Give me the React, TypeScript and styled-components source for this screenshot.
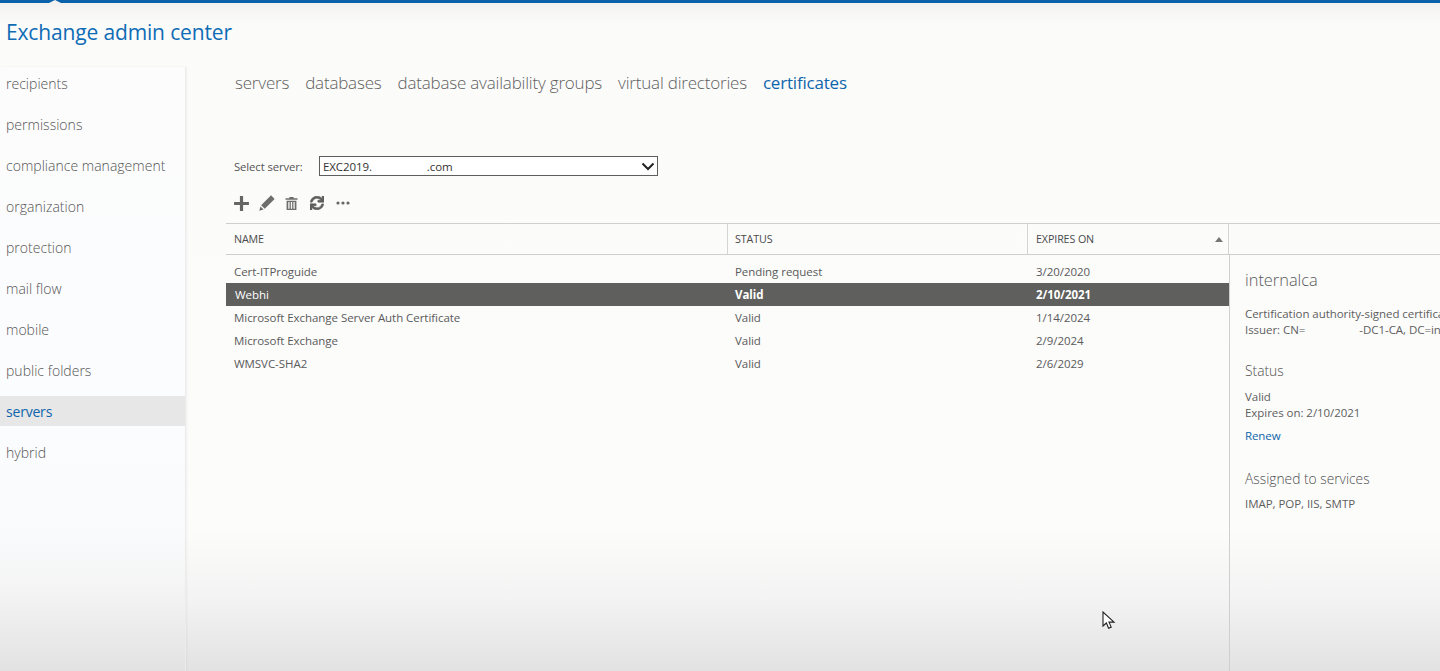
import React from "react"
import styled, { createGlobalStyle } from "styled-components"
import { FaSync } from "react-icons/fa"

const GlobalStyle = createGlobalStyle`
  html, body {
    margin: 0;
    padding: 0;
    height: 100%;
    overflow: hidden;
  }
  * {
    box-sizing: border-box;
  }
`

const Page: any = styled.div`
  position: relative;
  width: 1440px;
  height: 671px;
  overflow: hidden;
  display: flex;
  flex-direction: column;
  font-family: "Open Sans", "Noto Sans", sans-serif;
  color: #555;
  background: linear-gradient(
    180deg,
    #f3f2f1 3px,
    #fbfbfa 24px,
    #fcfcfb 530px,
    #f3f3f3 600px,
    #e2e2e2 671px
  );
`

const TopBar: any = styled.div`
  position: relative;
  height: 3px;
  flex: none;
  background: #0a62ab;

  &::after {
    content: "";
    position: absolute;
    left: 49px;
    top: 0;
    border-left: 6px solid transparent;
    border-right: 6px solid transparent;
    border-bottom: 3px solid #f3f2f1;
  }
`

const Title: any = styled.h1`
  flex: none;
  height: 64px;
  margin: 0;
  padding: 14px 0 0 6px;
  font-size: 21px;
  line-height: 30px;
  font-weight: 400;
  letter-spacing: -0.15px;
  color: #0f6cb5;
`

const Body: any = styled.div`
  flex: 1;
  min-height: 0;
  display: flex;
`

const Sidebar: any = styled.nav`
  width: 186px;
  flex: none;
  padding-top: 1px;
  border-right: 1px solid #ececec;
  box-shadow: 1px 0 2px rgba(0, 0, 0, 0.05);
  background: linear-gradient(
    180deg,
    #fcfcfc 0,
    #fbfcfe 340px,
    #fafbfd 450px,
    rgba(244, 244, 245, 0.6) 520px,
    rgba(226, 226, 226, 0.6) 604px
  );
`

const NavItem: any = styled.div`
  height: 30px;
  margin-bottom: 11px;
  padding-left: 6px;
  font-size: 14px;
  line-height: 32px;
  font-weight: ${(props: any) => (props.$active ? 400 : 300)};
  letter-spacing: ${(props: any) => (props.$active ? "-0.2px" : "0.02px")};
  color: ${(props: any) => (props.$active ? "#0f65ab" : "#555")};
  background: ${(props: any) => (props.$active ? "#e7e7e7" : "transparent")};
`

const Main: any = styled.main`
  flex: 1;
  min-width: 0;
  padding-left: 40px;
  display: flex;
  flex-direction: column;
`

const Tabs: any = styled.div`
  display: flex;
  gap: 16px;
  height: 32px;
  padding-left: 9px;
`

const Tab: any = styled.span`
  font-size: 17px;
  line-height: 32px;
  font-weight: ${(props: any) => (props.$active ? 400 : 300)};
  letter-spacing: -0.2px;
  white-space: nowrap;
  color: ${(props: any) => (props.$active ? "#0f65ab" : "#5f5f5f")};
`

const ServerRow: any = styled.div`
  display: flex;
  align-items: center;
  height: 20px;
  margin-top: 57px;
  padding-left: 8px;
`

const ServerLabel: any = styled.label`
  width: 85px;
  font-size: 11.3px;
  font-weight: 400;
  letter-spacing: -0.1px;
  color: #555;
`

const SelectBox: any = styled.div`
  width: 339px;
  height: 20px;
  display: flex;
  align-items: center;
  justify-content: space-between;
  padding: 0 2px 0 3px;
  border: 1px solid #5e5e5e;
  background: #fff;
  font-size: 11.5px;
  letter-spacing: -0.1px;
  color: #333;
`

const Gap: any = styled.span`
  display: inline-block;
  width: ${(props: any) => props.$w}px;
`

const Toolbar: any = styled.div`
  display: flex;
  align-items: center;
  height: 24px;
  margin-top: 15px;
  padding-left: 7px;
  color: #666;
`

const ToolIcon: any = styled.span`
  display: flex;
  align-items: center;
  justify-content: center;
  width: 16px;
  height: 16px;
  margin-right: ${(props: any) => props.$gap}px;
  color: #5e5e5e;

  svg {
    flex: none;
  }
`

const HeaderRow: any = styled.div`
  display: grid;
  grid-template-columns: 502px 300px 201px 1fr;
  height: 32px;
  margin-top: 8px;
  border-top: 1px solid #cfcfcf;
  border-bottom: 1px solid #cfcfcf;
`

const HeaderCell: any = styled.div`
  display: flex;
  align-items: center;
  justify-content: space-between;
  padding: 0 8px 0 ${(props: any) => props.$pad || 8}px;
  font-size: 10.7px;
  letter-spacing: -0.1px;
  color: #4a4a4a;
  border-right: 1px solid #d4d4d4;

  &:last-child {
    border-right: none;
  }
`

const SortArrow: any = styled.span`
  width: 0;
  height: 0;
  margin-right: -3px;
  border-left: 4px solid transparent;
  border-right: 4px solid transparent;
  border-bottom: 5px solid #777;
`

const Split: any = styled.div`
  flex: 1;
  min-height: 0;
  display: flex;
`

const ListPane: any = styled.div`
  width: 1003px;
  flex: none;
  padding-top: 5px;
`

const Row: any = styled.div`
  display: grid;
  grid-template-columns: 502px 300px 201px;
  height: 23px;
  align-items: center;
  font-size: 11.5px;
  letter-spacing: -0.05px;
  color: ${(props: any) => (props.$selected ? "#fff" : "#5a5a5a")};
  background: ${(props: any) => (props.$selected ? "#5f5f5d" : "transparent")};
`

const Cell: any = styled.div`
  padding-left: ${(props: any) => props.$pad}px;
  font-weight: ${(props: any) => (props.$bold ? 700 : 400)};
  white-space: nowrap;
`

const DetailPane: any = styled.aside`
  flex: 1;
  min-width: 0;
  padding: 13px 0 0 15px;
  border-left: 1px solid #cfcfcf;
  overflow: hidden;
  white-space: nowrap;
`

const DetailName: any = styled.h2`
  margin: 0 0 14px;
  font-size: 16.4px;
  line-height: 24px;
  font-weight: 300;
  color: #5a5a5a;
`

const DetailText: any = styled.div`
  font-size: 11.5px;
  line-height: 16px;
  letter-spacing: -0.05px;
  color: #5e5e5e;
`

const DetailHeading: any = styled.h3`
  margin: ${(props: any) => props.$top}px 0 ${(props: any) => props.$bottom}px;
  font-size: 13.8px;
  line-height: 20px;
  font-weight: 300;
  color: #4f4f4f;
`

const RenewLink: any = styled.a`
  display: block;
  margin-top: 7px;
  font-size: 11.5px;
  line-height: 16px;
  letter-spacing: -0.1px;
  color: #0f65ab;
`

const Cursor: any = styled.svg`
  position: absolute;
  left: 1102px;
  top: 611px;
`

const navItems = [
  "recipients",
  "permissions",
  "compliance management",
  "organization",
  "protection",
  "mail flow",
  "mobile",
  "public folders",
  "servers",
  "hybrid",
]

const tabs = [
  "servers",
  "databases",
  "database availability groups",
  "virtual directories",
  "certificates",
]

const certificates = [
  { name: "Cert-ITProguide", status: "Pending request", expires: "3/20/2020" },
  { name: "Webhi", status: "Valid", expires: "2/10/2021", selected: true },
  {
    name: "Microsoft Exchange Server Auth Certificate",
    status: "Valid",
    expires: "1/14/2024",
  },
  { name: "Microsoft Exchange", status: "Valid", expires: "2/9/2024" },
  { name: "WMSVC-SHA2", status: "Valid", expires: "2/6/2029" },
]

const App: React.FC = () => {
  return (
    <Page>
      <GlobalStyle />
      <TopBar />
      <Title>Exchange admin center</Title>
      <Body>
        <Sidebar>
          {navItems.map(item => (
            <NavItem key={item} $active={item === "servers"}>
              {item}
            </NavItem>
          ))}
        </Sidebar>
        <Main>
          <Tabs>
            {tabs.map(tab => (
              <Tab key={tab} $active={tab === "certificates"}>
                {tab}
              </Tab>
            ))}
          </Tabs>
          <ServerRow>
            <ServerLabel>Select server:</ServerLabel>
            <SelectBox>
              <span>
                EXC2019.
                <Gap $w={55} />
                .com
              </span>
              <svg width="14" height="9" viewBox="0 0 14 9">
                <path
                  d="M1.5 1.5 7 7l5.5-5.5"
                  fill="none"
                  stroke="#222"
                  strokeWidth="2"
                />
              </svg>
            </SelectBox>
          </ServerRow>
          <Toolbar>
            <ToolIcon $gap={10}>
              <svg width="17" height="17" viewBox="0 0 16 16">
                <path d="M6.5 1h3v5.5H15v3H9.5V15h-3V9.5H1v-3h5.5z" fill="#666" />
              </svg>
            </ToolIcon>
            <ToolIcon $gap={8}>
              <svg width="18" height="18" viewBox="0 0 16 16">
                <path d="M11.6 1.2 14.8 4.4 6 13.2 2.8 10zM2.2 11l2.8 2.8-3.9 1.1z" fill="#6e6e6e" />
              </svg>
            </ToolIcon>
            <ToolIcon $gap={10}>
              <svg width="15" height="15" viewBox="0 0 14 14">
                <path
                  d="M5 1h4v1.2h3.6v1.2H1.4V2.2H5zM2.4 4.4h9.2V13H2.4zM4 5.6v6.2h1.2V5.6zm2.4 0v6.2h1.2V5.6zm2.4 0v6.2H10V5.6z"
                  fill="#6e6e6e"
                  fillRule="evenodd"
                />
              </svg>
            </ToolIcon>
            <ToolIcon $gap={10}>
              <FaSync size={14} stroke="currentColor" strokeWidth={24} />
            </ToolIcon>
            <ToolIcon $gap={0}>
              <svg width="16" height="16" viewBox="0 0 16 16">
                <circle cx="3" cy="8" r="1.6" fill="#666" />
                <circle cx="8" cy="8" r="1.6" fill="#666" />
                <circle cx="13" cy="8" r="1.6" fill="#666" />
              </svg>
            </ToolIcon>
          </Toolbar>
          <HeaderRow>
            <HeaderCell>NAME</HeaderCell>
            <HeaderCell $pad={7}>STATUS</HeaderCell>
            <HeaderCell>
              EXPIRES ON
              <SortArrow />
            </HeaderCell>
            <HeaderCell />
          </HeaderRow>
          <Split>
            <ListPane>
              {certificates.map(cert => (
                <Row key={cert.name} $selected={cert.selected}>
                  <Cell $pad={cert.selected ? 9 : 8}>{cert.name}</Cell>
                  <Cell $pad={7} $bold={cert.selected}>
                    {cert.status}
                  </Cell>
                  <Cell $pad={8} $bold={cert.selected}>
                    {cert.expires}
                  </Cell>
                </Row>
              ))}
            </ListPane>
            <DetailPane>
              <DetailName>internalca</DetailName>
              <DetailText>Certification authority-signed certificate</DetailText>
              <DetailText>
                Issuer: CN=
                <Gap $w={54} />
                -DC1-CA, DC=internal
              </DetailText>
              <DetailHeading $top={23} $bottom={8}>
                Status
              </DetailHeading>
              <DetailText>Valid</DetailText>
              <DetailText>Expires on: 2/10/2021</DetailText>
              <RenewLink>Renew</RenewLink>
              <DetailHeading $top={25} $bottom={7}>
                Assigned to services
              </DetailHeading>
              <DetailText>IMAP, POP, IIS, SMTP</DetailText>
            </DetailPane>
          </Split>
        </Main>
      </Body>
      <Cursor width="14" height="20" viewBox="0 0 14 20">
        <path
          d="M1 1v14l3.4-3 2.2 5.2 2.6-1.1-2.2-5H12z"
          fill="#fff"
          stroke="#222"
          strokeWidth="1.1"
        />
      </Cursor>
    </Page>
  )
}

export default App
